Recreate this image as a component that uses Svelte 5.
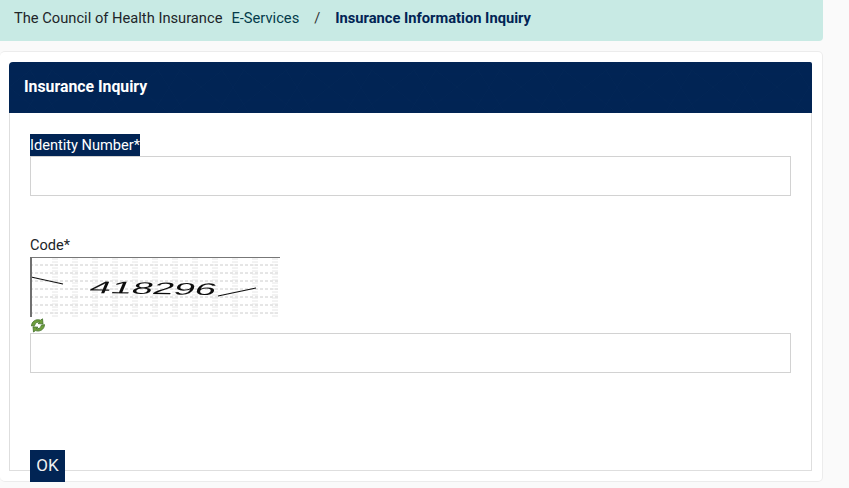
<script lang="ts">
    // captcha noise: long dashed rows plus short tick columns
    const rows = [8, 16, 24, 32, 40, 48, 56];
    const cols = [25, 45, 65, 85, 105, 125, 145, 165, 185, 205, 225, 245];
    const ticks = Array.from({ length: 20 }, (_, i) => 2 + i * 3);
</script>

<div class="page">
    <nav class="crumbs">
        <span class="home">The Council of Health Insurance</span>
        <span class="service">E-Services</span>
        <span class="sep">/</span>
        <strong class="current">Insurance Information Inquiry</strong>
    </nav>

    <main class="card">
        <section class="panel">
            <header class="panel-head">
                <svg class="pattern" width="803" height="51" aria-hidden="true">
                    <defs>
                        <pattern id="stars" width="64" height="51" patternUnits="userSpaceOnUse">
                            <path d="M0 25 32 0 64 25 32 51Z M16 0 48 51 M48 0 16 51 M0 12H64 M0 38H64" fill="none" stroke="#0b2c5b" stroke-width="1" />
                        </pattern>
                    </defs>
                    <rect width="803" height="51" fill="url(#stars)" />
                </svg>
                <h1>Insurance Inquiry</h1>
            </header>

            <form class="panel-body" on:submit|preventDefault>
                <label class="id-label" for="identity"><span>Identity Number*</span></label>
                <input id="identity" type="text" />

                <label class="code-label" for="code">Code*</label>
                <svg class="captcha" width="250" height="60" viewBox="0 0 250 60" role="img" aria-label="Captcha">
                    <defs>
                        <filter id="soft"><feGaussianBlur stdDeviation="0.5" /></filter>
                    </defs>
                    <rect width="250" height="60" fill="#fff" />
                    <g filter="url(#soft)">
                        {#each rows as y}
                            <line x1="0" x2="250" y1={y} y2={y} stroke="#cccccc" stroke-dasharray="3 2" />
                        {/each}
                        {#each cols as x}
                            {#each ticks as y}
                                <line x1={x - 3} x2={x + 3} y1={y} y2={y} stroke="#e6e6e6" />
                            {/each}
                        {/each}
                        <line x1="1" y1="20" x2="33" y2="27" stroke="#111" stroke-width="1.2" />
                        <line x1="188" y1="39" x2="226" y2="31" stroke="#111" stroke-width="1.2" />
                        <text class="captcha-text" transform="translate(58 36) rotate(1) skewX(-22) scale(1.3 0.85)" textLength="97" lengthAdjust="spacingAndGlyphs">418296</text>
                    </g>
                    <line x1="0" x2="250" y1="0.5" y2="0.5" stroke="#777" />
                    <line x1="1" x2="1" y1="0" y2="60" stroke="#707070" stroke-width="2" />
                </svg>
                <svg class="refresh" width="16" height="15" viewBox="0 0 16 15" aria-label="Refresh">
                    <path d="M1.5 8C1.5 3.5 6 .5 10.5 2.2L12.5 .8 13 6 8 5.6 9.8 4.2C7.5 3.6 5 5 4.6 7.6Z" fill="#6f9f3c" stroke="#41702a" stroke-width="0.8" />
                    <path d="M14.5 6.6C14.5 11.2 10 14.2 5.5 12.6L3.5 14 3 8.8 8 9.2 6.2 10.6C8.5 11.2 11 9.8 11.4 7.2Z" fill="#6f9f3c" stroke="#41702a" stroke-width="0.8" />
                </svg>
                <input id="code" type="text" />

                <button type="submit">OK</button>
            </form>
        </section>
    </main>
</div>

<style>
    :global(body) {
        margin: 0;
        background: #fafafa;
        font-family: Roboto, "Liberation Sans", sans-serif;
    }

    .page {
        width: 849px;
        height: 488px;
        overflow: hidden;
    }

    .crumbs {
        width: 809px;
        height: 35px;
        padding: 0 0 6px 14px;
        display: flex;
        align-items: center;
        background: #c8eae4;
        border-bottom-right-radius: 4px;
        font-size: 14.7px;
        color: #212529;
    }

    .service {
        margin-left: 9px;
        color: #033b4a;
    }

    .sep {
        margin-left: 15px;
        color: #333;
    }

    .current {
        margin-left: 15px;
        color: #012454;
        font-weight: 700;
    }

    .card {
        width: 823px;
        height: 431px;
        margin-top: 10px;
        box-sizing: border-box;
        padding: 10px 10px 10px 9px;
        background: #fff;
        border: 1px solid #ececec;
        border-left: 0;
        border-radius: 5px;
    }

    .panel {
        height: 409px;
        display: flex;
        flex-direction: column;
    }

    .panel-head {
        position: relative;
        height: 51px;
        flex: none;
        display: flex;
        align-items: center;
        padding-left: 15px;
        padding-bottom: 2px;
        box-sizing: border-box;
        background: #012454;
        border-top-left-radius: 4px;
        border-top-right-radius: 2px;
        overflow: hidden;
    }

    .pattern {
        position: absolute;
        left: 0;
        top: 0;
        opacity: 0.3;
    }

    h1 {
        position: relative;
        margin: 0;
        font-size: 15.8px;
        font-weight: 700;
        color: #fff;
    }

    .panel-body {
        flex: 1;
        min-height: 0;
        display: flex;
        flex-direction: column;
        align-items: flex-start;
        padding: 21px 20px 0 20px;
        border: 1px solid #dedede;
        border-top: 0;
    }

    label {
        display: block;
        height: 22px;
        font-size: 14.6px;
        line-height: 22px;
        color: #212529;
    }

    .id-label span {
        display: block;
        height: 22px;
        background: #012454;
        color: #fff;
    }

    input {
        width: 761px;
        height: 40px;
        flex: none;
        box-sizing: border-box;
        margin: 0;
        background: #fff;
        border: 1px solid #d2d2d2;
    }

    .code-label {
        margin-top: 38px;
    }

    .captcha {
        display: block;
        flex: none;
        margin-top: 1px;
    }

    .captcha-text {
        font-family: "Liberation Sans", sans-serif;
        font-size: 20px;
        fill: #111;
    }

    .refresh {
        display: block;
        flex: none;
        margin-top: 1px;
    }

    button {
        width: 35px;
        height: 32px;
        flex: none;
        margin-top: 77px;
        padding: 0 0 2px;
        border: 0;
        background: #012454;
        color: #f0f0f0;
        font-family: inherit;
        font-size: 17px;
        font-weight: 400;
    }
</style>
